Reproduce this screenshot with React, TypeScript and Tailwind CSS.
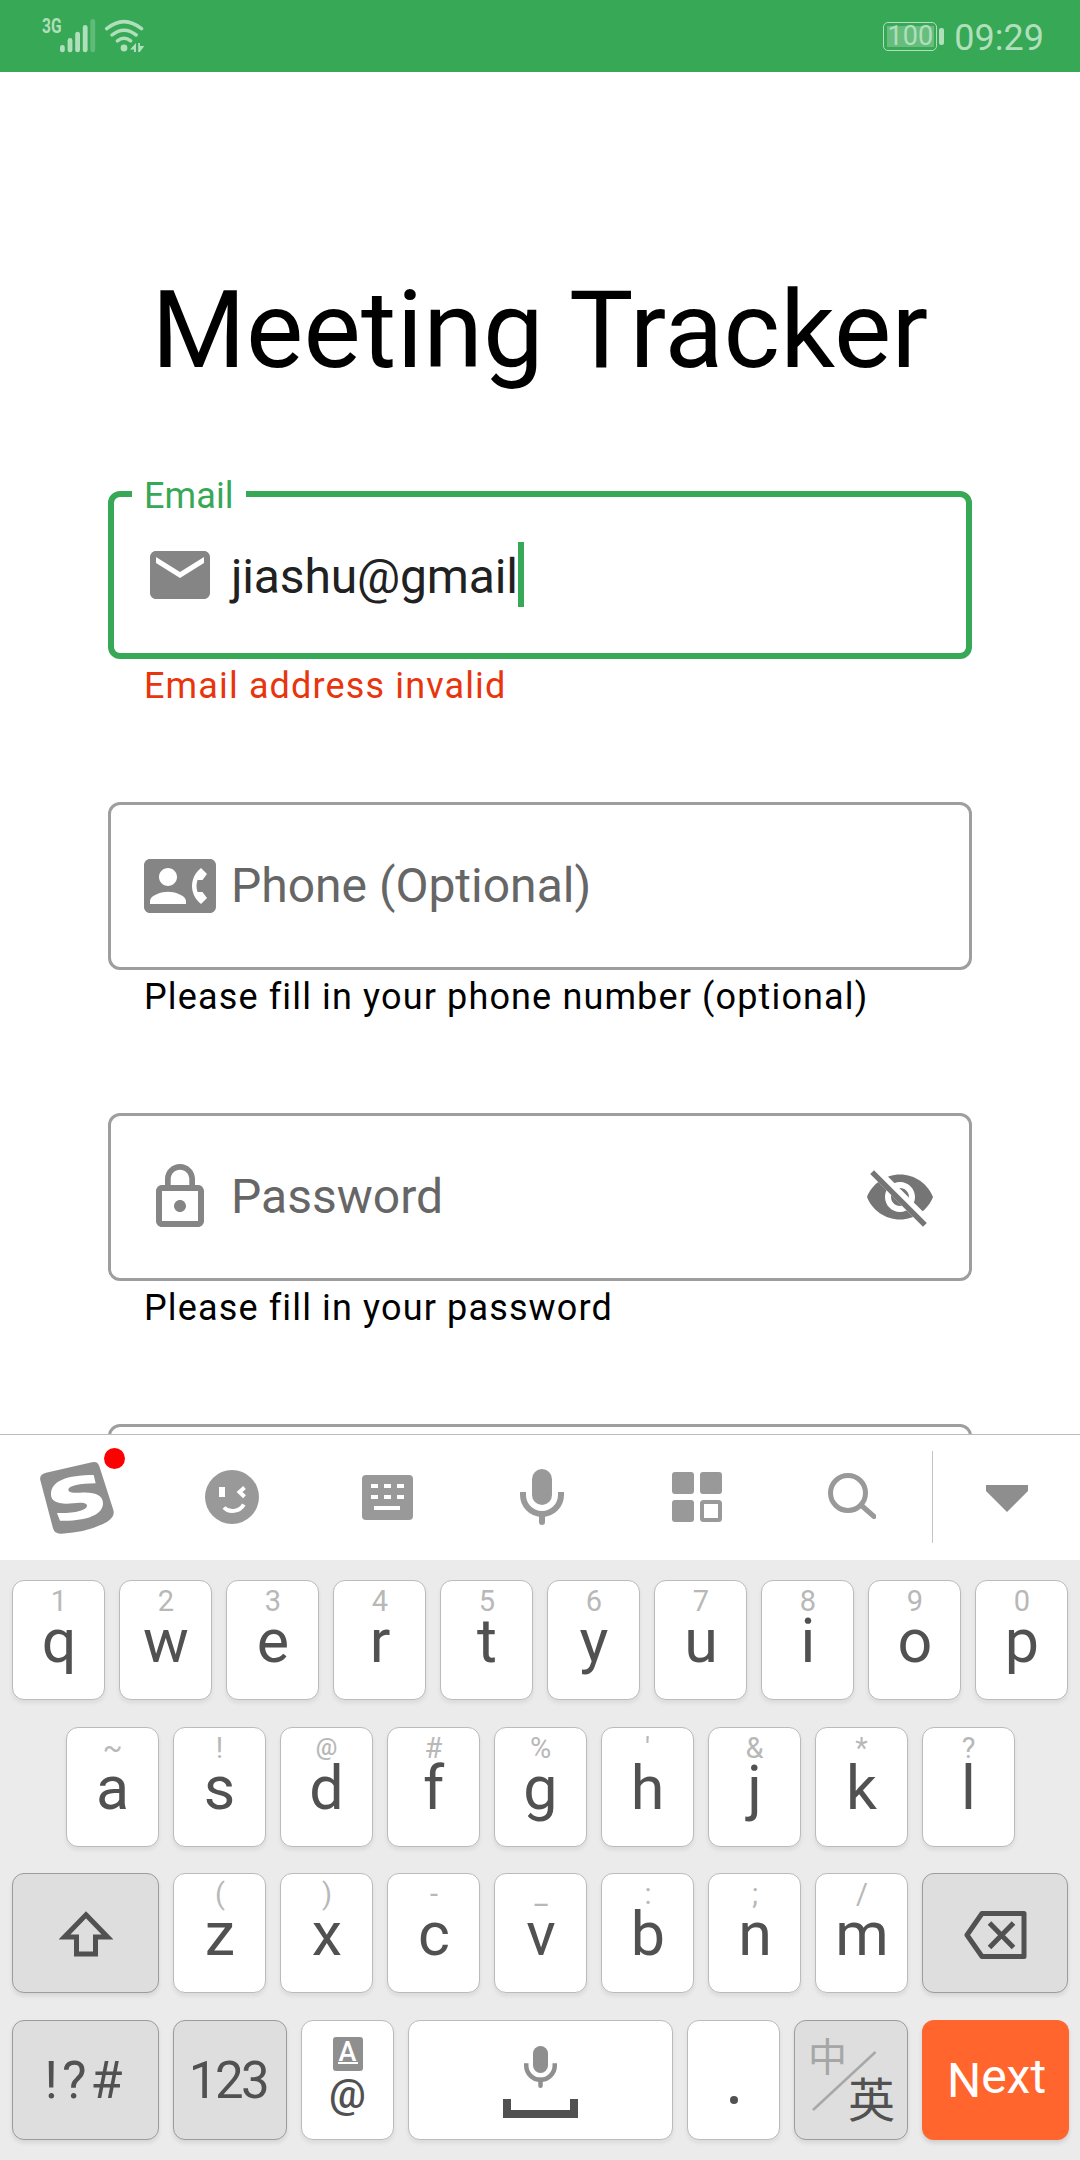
import type { ReactNode } from "react";

const ROBOTO = "font-[Roboto,'Noto_Sans_CJK_SC',sans-serif]";

function StatusBar() {
  return (
    <header className="flex h-[72px] shrink-0 items-start justify-between bg-[#37a855] text-[#afdfbb]">
      <div className="flex pl-[42px]">
        <span className="mt-[16px] w-[18px] origin-left scale-x-[0.74] whitespace-nowrap text-[21px] leading-[21px] font-bold">
          3G
        </span>
        <svg className="mt-[18px] h-[36px] w-[86px]" viewBox="60 18 86 36" fill="currentColor">
          <rect x="60" y="45" width="4.8" height="7.3" rx="2.4" />
          <rect x="67.6" y="38" width="4.8" height="14.3" rx="2.4" />
          <rect x="75.2" y="31.7" width="4.8" height="20.6" rx="2.4" />
          <rect x="82.8" y="25" width="4.8" height="27.3" rx="2.4" />
          <rect x="90.4" y="19" width="4.8" height="33.3" rx="2.4" opacity="0.35" />
          <g fill="none" stroke="currentColor" strokeWidth="3.5" strokeLinecap="round">
            <path d="M106.7 28.7 Q124 14.500 141.500 28.700" />
            <path d="M112 35 Q124 25.500 136.200 35" />
            <path d="M117.400 40.800 Q124 35.600 130.700 40.800" />
          </g>
          <circle cx="124" cy="48" r="3.400" />
          <path d="M130 49.500 L136 43 V52 H134 V49.500 Z" />
          <path d="M138.200 52 V43 H140 V46 H144.300 L139.800 52 Z" />
        </svg>
      </div>
      <div className="flex pr-[36px]">
        <div className="mt-[22px] flex h-[29px] w-[54px] items-center justify-center rounded-[5px] border-[1.5px] border-[#afdfbb]">
          <div className="flex h-[21px] w-[47px] items-center justify-center bg-[#67bd7d] text-[27px] leading-[21px]">
            100
          </div>
        </div>
        <div className="mt-[28px] ml-[2px] h-[17px] w-[5px] rounded-[2px] bg-[#afdfbb]" />
        <span className="mt-[16px] ml-[10px] text-[36px] leading-[44px]">09:29</span>
      </div>
    </header>
  );
}

function MailIcon() {
  return (
    <svg className="size-[72px]" viewBox="0 0 24 24" fill="#858585">
      <path d="M20 4H4c-1.100 0-1.990.9-1.990 2L2 18c0 1.100.9 2 2 2h16c1.100 0 2-.9 2-2V6c0-1.100-.9-2-2-2zm0 4l-8 5-8-5V6l8 5 8-5v2z" />
    </svg>
  );
}

function ContactPhoneIcon() {
  return (
    <svg className="size-[72px]" viewBox="0 0 24 24" fill="#858585">
      <path d="M22 3H2C.9 3 0 3.900 0 5v14c0 1.100.9 2 2 2h20c1.100 0 1.990-.9 1.990-2L24 5c0-1.100-.9-2-2-2zM8 6c1.660 0 3 1.340 3 3s-1.340 3-3 3-3-1.340-3-3 1.340-3 3-3zm6 12H2v-1c0-2 4-3.100 6-3.100s6 1.100 6 3.100v1zm3.850-4h1.640L21 16l-1.990 1.990c-1.310-.98-2.280-2.380-2.730-3.990-.18-.64-.28-1.310-.28-2s.1-1.360.28-2c.45-1.620 1.420-3.010 2.730-3.990L21 8l-1.510 2h-1.640c-.22.63-.35 1.300-.35 2s.13 1.370.35 2z" />
    </svg>
  );
}

function LockIcon() {
  return (
    <svg className="size-[72px]" viewBox="0 0 24 24" fill="#858585">
      <path d="M12 17c1.100 0 2-.9 2-2s-.9-2-2-2-2 .9-2 2 .9 2 2 2zm6-9h-1V6c0-2.760-2.240-5-5-5S7 3.240 7 6v2H6c-1.100 0-2 .9-2 2v10c0 1.100.9 2 2 2h12c1.100 0 2-.9 2-2V10c0-1.100-.9-2-2-2zM8.900 6c0-1.710 1.390-3.100 3.100-3.100s3.100 1.390 3.100 3.100v2H8.900V6zM18 20H6V10h12v10z" />
    </svg>
  );
}

function EyeOffIcon() {
  return (
    <svg className="size-[72px]" viewBox="0 0 24 24">
      <clipPath id="eye-cut">
        <path d="M2 4.270L19.730 22L22.270 19.460L4.540 1.730V1H23V23H1V4.270Z" />
      </clipPath>
      <path
        clipPath="url(#eye-cut)"
        fill="#757575"
        d="M12 4.500C7 4.500 2.730 7.610 1 12c1.730 4.390 6 7.500 11 7.500s9.270-3.110 11-7.500c-1.730-4.390-6-7.500-11-7.500zM12 17c-2.760 0-5-2.240-5-5s2.240-5 5-5 5 2.240 5 5-2.240 5-5 5zM12 9c-1.660 0-3 1.340-3 3s1.340 3 3 3 3-1.340 3-3-1.340-3-3-3z"
      />
      <path d="M2.700 3.700L20.300 21.300" stroke="#757575" strokeWidth="1.800" fill="none" />
    </svg>
  );
}

function Field({
  icon,
  label,
  helper,
  trailing,
}: {
  icon?: ReactNode;
  label?: string;
  helper?: string;
  trailing?: ReactNode;
}) {
  return (
    <div className="h-[311px] shrink-0">
      <div className="flex h-[168px] items-center rounded-[12px] border-[3px] border-[#9e9e9e] px-[33px]">
        {icon}
        <span className="ml-[15px] flex-1 text-[48px] leading-[56px] text-[#666]">{label}</span>
        {trailing}
      </div>
      <p className="mt-[6px] pl-[36px] text-[36px] leading-[42px] tracking-[1.14px] text-black">{helper}</p>
    </div>
  );
}

function EmailField() {
  return (
    <div className="h-[311px] shrink-0">
      <div className="relative flex h-[168px] items-center rounded-[12px] border-[6px] border-[#37a855] pl-[30px]">
        <span className="absolute top-[-13px] left-[18px] w-[114px] bg-white pl-[12px] text-[36px] leading-[24px] tracking-[0.1px] text-[#37a855]">
          Email
        </span>
        <MailIcon />
        <span className="mt-1 ml-[15px] text-[48px] leading-[56px] tracking-[-0.15px] text-[#212121]">jiashu@gmail</span>
        <span className="-mt-[1px] h-[65px] w-[6px] bg-[#37a855]" />
      </div>
      <p className="mt-[6px] pl-[36px] text-[36px] leading-[42px] tracking-[1.14px] text-[#e8350e]">
        Email address invalid
      </p>
    </div>
  );
}

function ToolCell({ children }: { children: ReactNode }) {
  return <div className="flex w-[155px] items-center justify-center pr-[1px] pb-[1px]">{children}</div>;
}

function Toolbar() {
  return (
    <div className="flex h-[126px] border-t border-[#bcbcbc] bg-white">
      <ToolCell>
        <div className="relative">
          <svg className="h-[73px] w-[75px]" viewBox="30 60 225 219">
            <path
              fill="#8f8f8f"
              d="M48 95L186 64Q203 60 208 76L250 207Q256 227 232 242Q175 274 95 278Q74 280 69 262L31 118Q27 100 48 95Z"
            />
            <path
              fill="#fff"
              d="M191 102L197 127C150 128 115 134 115 146C115 154 130 156 150 155C195 152 219 162 219 187C219 225 160 242 90 239L81 216C130 218 171 208 171 194C171 185 150 184 130 187C85 191 63 183 63 160C63 120 110 102 191 102Z"
            />
          </svg>
          <span className="absolute -top-[13px] right-[-10px] size-[21px] rounded-full bg-[#f00]" />
        </div>
      </ToolCell>
      <ToolCell>
        <svg className="size-[54px]" viewBox="0 0 54 54">
          <circle cx="27" cy="27" r="27" fill="#999" />
          <rect x="14" y="17" width="6" height="10" fill="#fff" />
          <g fill="none" stroke="#fff" strokeWidth="4">
            <path d="M39.500 17.500L34.500 22L39.500 26.800" />
            <path d="M19 37.500C24 43 34.500 42 38.800 34.500" />
          </g>
        </svg>
      </ToolCell>
      <ToolCell>
        <svg className="h-[45px] w-[51px]" viewBox="0 0 51 45">
          <rect width="51" height="45" rx="4" fill="#999" />
          <path fill="#fff" d="M9 9h7v4h-7zM22 9h7v4h-7zM35 9h7v4h-7zM9 20h7v4h-7zM22 20h7v4h-7zM35 20h7v4h-7zM12 31h26v4h-26z" />
        </svg>
      </ToolCell>
      <ToolCell>
        <MicIcon className="h-[56px] w-[44px] text-[#999]" />
      </ToolCell>
      <ToolCell>
        <svg className="size-[50px]" viewBox="0 0 50 50" fill="#999">
          <rect width="22" height="22" rx="3" />
          <rect x="28" width="22" height="22" rx="3" />
          <rect y="28" width="22" height="22" rx="3" />
          <rect x="30" y="30" width="18" height="18" rx="1.500" fill="none" stroke="#999" strokeWidth="4" />
        </svg>
      </ToolCell>
      <ToolCell>
        <svg className="mb-[2px] h-[46px] w-[48px]" viewBox="0 0 48 46" fill="none" stroke="#999" strokeWidth="5">
          <circle cx="20" cy="20" r="17.500" />
          <path d="M33.500 32.500L46 43.500" strokeLinecap="round" />
        </svg>
      </ToolCell>
      <div className="mt-[16px] ml-[2px] h-[92px] w-px bg-[#c4c4c4]" />
      <div className="flex flex-1 items-center justify-center pt-[2px]">
        <svg className="h-[27px] w-[42px]" viewBox="0 0 42 27">
          <path d="M0 0H42V6L21 27L0 6Z" fill="#8e8e8e" />
        </svg>
      </div>
    </div>
  );
}

function MicIcon({ className }: { className: string }) {
  return (
    <svg className={className} viewBox="0 0 44 56" fill="currentColor">
      <rect x="12" width="20" height="36" rx="10" />
      <path d="M3 23V26A19 19 0 0 0 41 26V23" fill="none" stroke="currentColor" strokeWidth="6" />
      <path d="M22 45V53" stroke="currentColor" strokeWidth="6" strokeLinecap="round" />
    </svg>
  );
}

const WHITE_KEY =
  "flex h-[120px] flex-col items-center rounded-[12px] border border-[#bbb] bg-white shadow-[0_3px_4px_rgba(0,0,0,0.07)]";
const GRAY_KEY =
  "flex h-[120px] items-center justify-center rounded-[12px] border border-[#9c9c9c] bg-[#dedede] shadow-[0_3px_4px_rgba(0,0,0,0.09)]";

function LetterKey({ hint, letter }: { hint: string; letter: string }) {
  const hintSize = hint === "@" ? "text-[24px] leading-[28px] font-medium" : "text-[29px] leading-[30px]";
  return (
    <div className={`${WHITE_KEY} w-[93px] pt-[5px] pl-[1px]`}>
      <span className={`${hintSize} h-[30px] text-[#b8b8b8]`}>{hint}</span>
      <span className="text-[61px] leading-[51px] text-[#515151]">{letter}</span>
    </div>
  );
}

function LetterKeys({ hints, letters }: { hints: string; letters: string }) {
  return (
    <>
      {letters.split("").map((letter, i) => (
        <LetterKey key={letter} hint={hints[i]} letter={letter} />
      ))}
    </>
  );
}

function Keyboard() {
  return (
    <div className="flex h-[600px] flex-col bg-[#ebebeb] pt-[20px]">
      <div className="flex justify-center gap-[14px]">
        <LetterKeys hints="1234567890" letters="qwertyuiop" />
      </div>
      <div className="mt-[27px] flex justify-center gap-[14px]">
        <LetterKeys hints="~!@#%'&*?" letters="asdfghjkl" />
      </div>
      <div className="mt-[26px] flex gap-[14px] pl-[12px]">
        <div className={`${GRAY_KEY} w-[147px]`}>
          <svg className="mt-[2px] h-[46px] w-[54px]" viewBox="0 0 54 46" fill="none" stroke="#515151" strokeWidth="5">
            <path d="M27 3.800L48.500 26H36.500V43H17.500V26H5.500Z" />
          </svg>
        </div>
        <LetterKeys hints="()-_:;/" letters="zxcvbnm" />
        <div className={`${GRAY_KEY} w-[146px]`}>
          <svg className="mt-[4px] h-[48px] w-[63px]" viewBox="0 0 63 48" fill="none" stroke="#515151" strokeWidth="5">
            <path d="M18 2.500H60V45.500H18L3 24Z" strokeLinejoin="round" />
            <path d="M25.500 12L49.500 36.500M49.500 12L25.500 36.500" />
          </svg>
        </div>
      </div>
      <div className="mt-[27px] flex gap-[14px] pl-[12px] text-[#515151]">
        <div className={`${GRAY_KEY} w-[147px] pt-[2px] text-[52px] tracking-[4px]`}>!?#</div>
        <div className={`${GRAY_KEY} w-[114px] pt-[2px] pr-[4px] text-[51px] tracking-[-2.5px]`}>123</div>
        <div className={`${WHITE_KEY} w-[93px] pt-[16px]`}>
          <span className="flex h-[34px] w-[30px] flex-col items-center rounded-[3px] bg-[#8f8f8f] text-white">
            <span className="h-[25px] text-[27px] leading-[31px] font-medium">A</span>
            <span className="h-[2px] w-[20px] bg-white" />
          </span>
          <span className="mt-[1px] text-[41px] leading-[44px] font-medium">@</span>
        </div>
        <div className={`${WHITE_KEY} w-[265px] pt-[25px]`}>
          <MicIcon className="h-[42px] w-[33px] text-[#8f8f8f]" />
          <span className="mt-[11px] h-[19px] w-[75px] border-8 border-t-0 border-[#515151]" />
        </div>
        <div className={`${WHITE_KEY} w-[93px] justify-end pb-[35px]`}>
          <span className="size-[8px] rounded-full bg-[#515151]" />
        </div>
        <div className={`${GRAY_KEY} relative w-[114px]`}>
          <svg className="size-full" viewBox="0 0 112 118">
            <path d="M18 89L80.500 31" stroke="#a8a8a8" strokeWidth="2.500" />
          </svg>
          <span className="absolute top-[18px] left-[13px] text-[39px] leading-[39px] text-[#a6a6a6]">中</span>
          <span className="absolute top-[56px] left-[53px] text-[47px] leading-[48px]">英</span>
        </div>
        <div className="flex h-[120px] w-[147px] items-center justify-center rounded-[12px] bg-[#ff652c] pt-[2px] pl-[2px] text-[48px] text-white shadow-[0_3px_4px_rgba(0,0,0,0.12)]">
          <span>N</span>
          <span className="mb-[8px]">ext</span>
        </div>
      </div>
    </div>
  );
}

export default function App() {
  return (
    <div className={`${ROBOTO} flex h-[2160px] w-[1080px] flex-col overflow-hidden bg-white`}>
      <StatusBar />
      <main className="flex h-[1362px] shrink-0 flex-col overflow-hidden px-[108px] pt-[198px]">
        <h1 className="mb-[101px] text-center text-[108px] leading-[120px] tracking-[0.25px] whitespace-nowrap text-black">
          Meeting Tracker
        </h1>
        <EmailField />
        <Field
          icon={<ContactPhoneIcon />}
          label="Phone (Optional)"
          helper="Please fill in your phone number (optional)"
        />
        <Field icon={<LockIcon />} label="Password" helper="Please fill in your password" trailing={<EyeOffIcon />} />
        <Field />
      </main>
      <Toolbar />
      <Keyboard />
    </div>
  );
}
